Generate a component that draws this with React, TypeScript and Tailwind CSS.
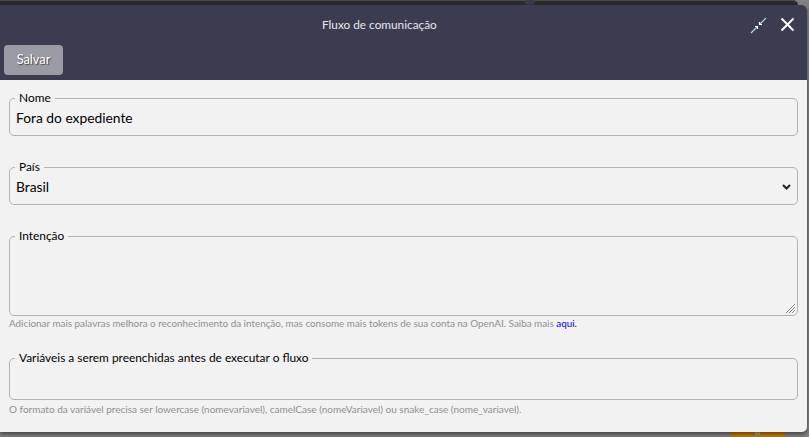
import React from 'react'

const fieldsetClass = 'border border-[#b3b3b3] rounded-[5px] px-[5px] m-0 min-w-0'
const legendClass = 'px-[4px] text-[11.9px] leading-[16px] text-black'
const helpClass = 'leading-[13px] text-[#8f8f8f]'
const valueClass = 'pl-[1px] pt-[2px] text-[13.8px] leading-[20px] text-black'

// Main modal
const App: React.FC = () => {
  return (
    <div className="relative h-[437px] w-[809px] overflow-hidden bg-[#808080] font-['Lato',sans-serif]">
      <div className="h-[5px] w-[798px] rounded-tr-[5px] border-t border-[#4a4a4a] bg-[#2b2b2b]"></div>
      <div className="absolute left-[525px] top-0 h-[5px] w-[10px] rounded-b-[3px] bg-[#3a3a4a]"></div>
      <div className="absolute left-[728px] top-[417px] h-[60px] w-[60px] rounded-full bg-[#c27a00]"></div>
      <div className="absolute left-[755px] top-[432px] h-[3px] w-[5px] bg-[#a0a0a0]"></div>

      <div className="relative h-[427px] w-[807px] overflow-hidden rounded-br-[5px] rounded-tr-[5px] bg-[#f2f2f2] shadow-[0_2px_4px_rgba(0,0,0,0.5)]">
        <div className="h-[75px] bg-[#3c3c50] text-white">
          <div className="relative flex h-[40px] items-center pl-[322px] text-[11.8px]">
            <span className="text-[#e8e8ec]">Fluxo de comunicação</span>
            <svg className="absolute left-[750px] top-[12px]" width="17" height="17" viewBox="0 0 17 17" fill="none" stroke="#bcd6f5" strokeWidth="1.2">
              <path d="M1 16L7.5 9.5M16 1L9.5 7.5" />
              <path d="M5 9.5H7.5V12M12 7.5H9.5V5" stroke="#ffffff" />
            </svg>
            <svg className="absolute left-[780px] top-[12px]" width="15" height="15" viewBox="0 0 15 15" fill="none" stroke="#ffffff" strokeWidth="2">
              <path d="M1.5 1.5L13.5 13.5M13.5 1.5L1.5 13.5" />
            </svg>
          </div>
          <button className="ml-[4px] h-[30px] w-[59px] rounded-[4px] bg-[#9b9ba5] text-[12.8px] text-white [text-shadow:1px_1px_1px_rgba(0,0,0,0.6)]">
            Salvar
          </button>
        </div>

        <div className="px-[9px] pt-[10px]">
          <fieldset className={`${fieldsetClass} h-[46px]`}>
            <legend className={legendClass}>Nome</legend>
            <div className={valueClass}>Fora do expediente</div>
          </fieldset>

          <fieldset className={`${fieldsetClass} mt-[23px] h-[46px]`}>
            <legend className={legendClass}>País</legend>
            <div className={`${valueClass} flex items-center justify-between`}>
              <span>Brasil</span>
              <svg className="mr-[1px]" width="9" height="6" viewBox="0 0 9 6" fill="none" stroke="#222222" strokeWidth="2">
                <path d="M1 1L4.5 4.5L8 1" />
              </svg>
            </div>
          </fieldset>

          <fieldset className={`${fieldsetClass} relative mt-[23px] h-[88px]`}>
            <legend className={legendClass}>Intenção</legend>
            <svg className="absolute bottom-[1px] right-[1px]" width="11" height="11" viewBox="0 0 11 11" fill="none" stroke="#8a8a8a" strokeWidth="1">
              <path d="M1 10L10 1M4 10L10 4M7 10L10 7" />
            </svg>
          </fieldset>
          <p className={`${helpClass} mt-[1px] text-[9.87px]`}>
            Adicionar mais palavras melhora o reconhecimento da intenção, mas consome mais tokens de sua conta na OpenAI. Saiba mais <a className="text-[#0000ee]">aqui.</a>
          </p>

          <fieldset className={`${fieldsetClass} mt-[20px] h-[50px]`}>
            <legend className={legendClass}>Variáveis a serem preenchidas antes de executar o fluxo</legend>
          </fieldset>
          <p className={`${helpClass} mt-[3px] text-[10px]`}>
            O formato da variável precisa ser lowercase (nomevariavel), camelCase (nomeVariavel) ou snake_case (nome_variavel).
          </p>
        </div>
      </div>
    </div>
  )
}

export default App
